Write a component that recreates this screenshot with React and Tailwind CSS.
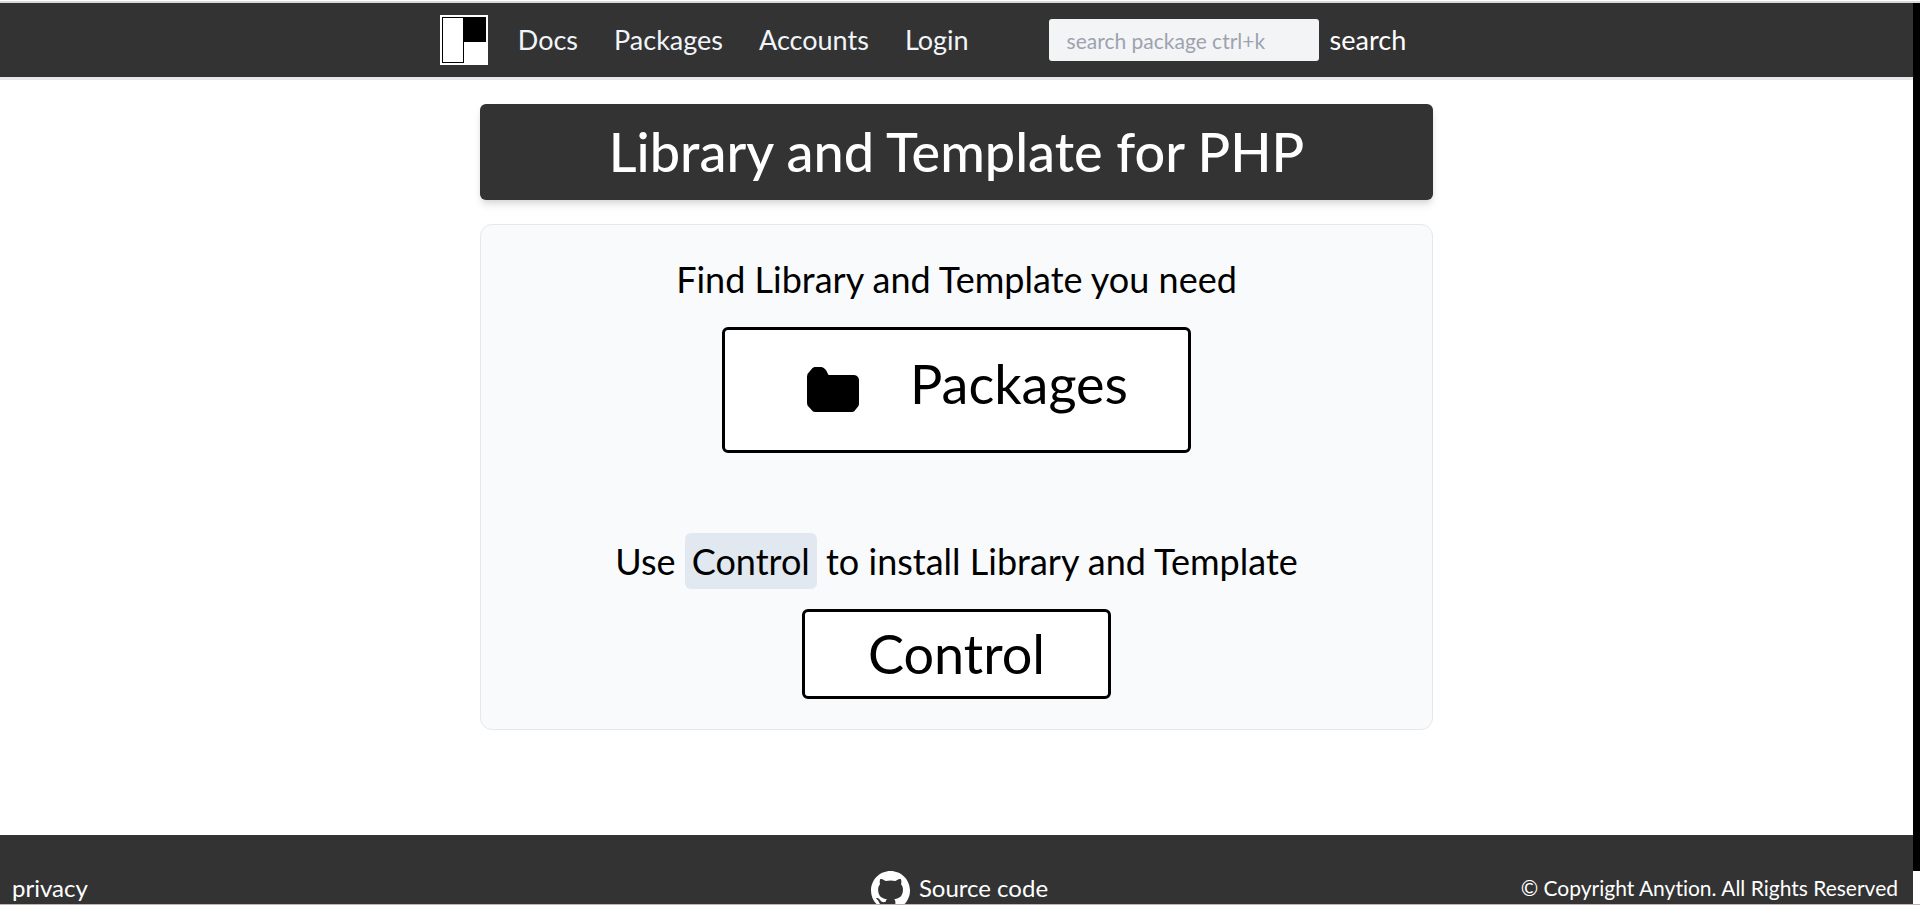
const navLinks = ["Docs", "Packages", "Accounts", "Login"];

function Logo() {
  return (
    <svg viewBox="0 0 48 50" className="h-[50px] w-12" aria-hidden="true">
      <rect width="48" height="50" fill="#fff" />
      <rect x="2.5" y="2.5" width="21" height="45" fill="#fff" stroke="#000" />
      <rect x="23" y="2" width="23" height="25" fill="#000" />
    </svg>
  );
}

function FolderIcon() {
  return (
    <svg viewBox="0 0 52 45" className="h-[45px] w-[52px]" aria-hidden="true">
      <path d="M7.500 0H14.500Q18.500 1 20.500 6L21.500 8H47Q52 8.500 52 13.500V37L51.500 39L47 44.500L45 45H8L6 44.500L.5 38.500L0 36V9.500L.5 7L5.500 1Z" />
    </svg>
  );
}

function GithubMark() {
  return (
    <svg viewBox="0 0 16 16" className="size-[39px]" fill="currentColor" aria-hidden="true">
      <path d="M8 0C3.580 0 0 3.580 0 8c0 3.540 2.290 6.530 5.470 7.590.4.070.55-.17.55-.38 0-.19-.01-.82-.01-1.490-2.010.37-2.530-.49-2.690-.94-.09-.23-.48-.94-.82-1.130-.28-.15-.68-.52-.01-.53.63-.01 1.080.58 1.230.82.72 1.210 1.870.87 2.330.66.070-.52.28-.87.51-1.070-1.780-.2-3.640-.89-3.640-3.950 0-.87.31-1.590.82-2.150-.08-.2-.36-1.020.08-2.120 0 0 .67-.21 2.200.82.64-.18 1.320-.27 2-.27s1.360.09 2 .27c1.530-1.040 2.200-.82 2.200-.82.44 1.100.16 1.920.08 2.120.51.56.82 1.270.82 2.150 0 3.070-1.870 3.750-3.650 3.950.29.25.54.73.54 1.480 0 1.070-.01 1.930-.01 2.200 0 .21.15.46.55.38A8.010 8.010 0 0 0 16 8c0-4.420-3.580-8-8-8Z" />
    </svg>
  );
}

function Header() {
  return (
    <header className="flex h-[77px] shrink-0 items-center justify-center border-b-3 border-[#e5e7eb] bg-[#333333] pr-[67px] text-[27px] leading-9">
      <a href="#home" aria-label="Home">
        <Logo />
      </a>
      <nav className="ml-[30px] flex gap-9 text-slate-100">
        {navLinks.map((label) => (
          <a key={label} href={"#" + label.toLowerCase()}>
            {label}
          </a>
        ))}
      </nav>
      <form className="ml-20 flex items-center gap-[11px]" onSubmit={(e) => e.preventDefault()}>
        <input
          type="search"
          aria-label="Search packages"
          placeholder="search package ctrl+k"
          className="h-[42px] w-[270px] rounded-[3px] bg-gray-100 px-[18px] text-[21px] text-black placeholder:text-[#9ca3af]"
        />
        <button type="submit" className="text-white">
          search
        </button>
      </form>
    </header>
  );
}

function Footer() {
  return (
    <footer className="grid shrink-0 grid-cols-3 items-start bg-[#333333] px-3 pt-9 text-2xl leading-[34px] text-white">
      <a href="#privacy">privacy</a>
      <a href="#source" className="flex items-start justify-center gap-[9px] pl-1.5">
        <GithubMark />
        Source code
      </a>
      <p className="pr-[3px] text-right text-[21px] leading-[34px]">© Copyright Anytion. All Rights Reserved</p>
    </footer>
  );
}

export default function App() {
  return (
    <div className="flex h-screen flex-col overflow-hidden border-b border-[#c4b0b0] bg-white font-['Lato',sans-serif] text-black [font-variant-ligatures:none]">
      <div className="mt-px h-0.5 shrink-0 bg-[#d9d9d9]" />
      <div className="flex min-h-0 flex-1">
        <div className="flex min-w-0 flex-1 flex-col overflow-hidden">
          <Header />
          <main className="mx-auto w-full max-w-[953px] shrink-0 pt-6 pb-[105px] text-center">
            <h1 className="rounded-md bg-[#333333] py-[18px] text-[54px] leading-[60px] font-medium text-white shadow-[0_6px_9px_-1px_rgb(0_0_0/0.1),0_3px_6px_-2px_rgb(0_0_0/0.1)]">
              Library and Template for PHP
            </h1>
            <section className="mt-6 flex flex-col items-center rounded-xl border border-[#e5e7eb] bg-[#f9fafc] py-[30px] text-4xl leading-12">
              <p>Find Library and Template you need</p>
              <a
                href="#packages"
                className="mt-6 flex h-[126px] items-start gap-[51px] rounded-md border-3 border-black bg-white pt-6 pr-[60px] pl-[82px] text-[54px] leading-[60px]"
              >
                <span className="pt-[13px]">
                  <FolderIcon />
                </span>
                Packages
              </a>
              <p className="mt-[84px]">
                Use <code className="rounded-md bg-slate-200 px-[7px] py-1.5 font-['Lato',sans-serif]">Control</code> to install
                Library and Template
              </p>
              <a
                href="#control"
                className="mt-6 rounded-md border-3 border-black bg-white px-[63px] py-3 text-[54px] leading-[60px]"
              >
                Control
              </a>
            </section>
          </main>
          <Footer />
        </div>
        <div className="w-[7px] shrink-0 bg-white pb-[33px]">
          <div className="h-full bg-black" />
        </div>
      </div>
    </div>
  );
}
